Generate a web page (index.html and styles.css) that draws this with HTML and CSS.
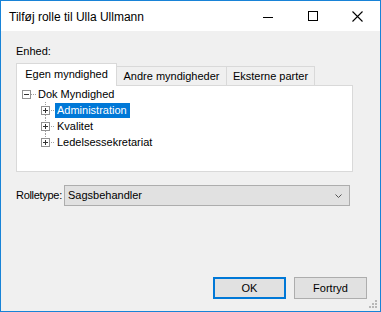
FILE: index.html
```html
<!DOCTYPE html>
<html>
<head>
<meta charset="utf-8">
<link rel="stylesheet" href="styles.css">
</head>
<body>
<div class="window">
  <div class="titlebar">
    <div class="title">Tilføj rolle til Ulla Ullmann</div>
    <div class="caption-btns">
      <div class="cbtn"><svg width="10" height="10" viewBox="0 0 10 10"><path d="M0 6.5H10" stroke="#000" stroke-width="1" shape-rendering="crispEdges"/></svg></div>
      <div class="cbtn"><svg width="10" height="10" viewBox="0 0 10 10"><rect x="0.5" y="0.5" width="9" height="9" fill="none" stroke="#000" stroke-width="1" shape-rendering="crispEdges"/></svg></div>
      <div class="cbtn"><svg width="11" height="11" viewBox="0 0 11 11"><path d="M0.5 0.5L10.5 10.5M10.5 0.5L0.5 10.5" stroke="#000" stroke-width="1.1"/></svg></div>
    </div>
  </div>
  <div class="content">
    <div class="label">Enhed:</div>
    <div class="tabs">
      <div class="tab tab-active w1">Egen myndighed</div>
      <div class="tab w2">Andre myndigheder</div>
      <div class="tab w3">Eksterne parter</div>
    </div>
    <div class="panel">
      <div class="tree">
        <div class="row">
          <svg class="gutter g-root" width="19" height="16" viewBox="0 0 19 16" shape-rendering="crispEdges">
            <rect x="5.5" y="4.5" width="8" height="8" fill="#fff" stroke="#919191"/>
            <path d="M7 8.5H12" stroke="#333"/>
            <path d="M14 8.5H19" stroke="#a0a0a0" stroke-dasharray="1,1"/>
          </svg>
          <span class="node">Dok Myndighed</span>
        </div>
        <div class="row">
          <svg class="gutter g-child" width="38" height="16" viewBox="0 0 38 16" shape-rendering="crispEdges">
            <path d="M28.5 0V4M28.5 13V16" stroke="#a0a0a0" stroke-dasharray="1,1"/>
            <rect x="24.5" y="4.5" width="8" height="8" fill="#fff" stroke="#919191"/>
            <path d="M26 8.5H31M28.5 6V11" stroke="#333"/>
            <path d="M34 8.5H38" stroke="#a0a0a0" stroke-dasharray="1,1"/>
          </svg>
          <span class="node selected">Administration</span>
        </div>
        <div class="row">
          <svg class="gutter g-child" width="38" height="16" viewBox="0 0 38 16" shape-rendering="crispEdges">
            <path d="M28.5 0V4M28.5 13V16" stroke="#a0a0a0" stroke-dasharray="1,1"/>
            <rect x="24.5" y="4.5" width="8" height="8" fill="#fff" stroke="#919191"/>
            <path d="M26 8.5H31M28.5 6V11" stroke="#333"/>
            <path d="M34 8.5H38" stroke="#a0a0a0" stroke-dasharray="1,1"/>
          </svg>
          <span class="node">Kvalitet</span>
        </div>
        <div class="row">
          <svg class="gutter g-child" width="38" height="16" viewBox="0 0 38 16" shape-rendering="crispEdges">
            <path d="M28.5 0V4" stroke="#a0a0a0" stroke-dasharray="1,1"/>
            <rect x="24.5" y="4.5" width="8" height="8" fill="#fff" stroke="#919191"/>
            <path d="M26 8.5H31M28.5 6V11" stroke="#333"/>
            <path d="M34 8.5H38" stroke="#a0a0a0" stroke-dasharray="1,1"/>
          </svg>
          <span class="node">Ledelsessekretariat</span>
        </div>
      </div>
    </div>
    <div class="role-row">
      <div class="role-label">Rolletype:</div>
      <div class="combo">
        <span class="combo-text">Sagsbehandler</span>
        <svg class="chevron" width="7" height="4" viewBox="0 0 7 4"><polyline points="0.5,0.5 3.5,3.5 6.5,0.5" fill="none" stroke="#555" stroke-width="1"/></svg>
      </div>
    </div>
    <div class="buttons">
      <div class="btn btn-default">OK</div>
      <div class="btn">Fortryd</div>
    </div>
    <svg class="grip" width="9" height="9" viewBox="0 0 9 9">
      <rect x="6" y="0" width="2" height="2" fill="#b8b8b8"/>
      <rect x="3" y="3" width="2" height="2" fill="#b8b8b8"/>
      <rect x="6" y="3" width="2" height="2" fill="#b8b8b8"/>
      <rect x="0" y="6" width="2" height="2" fill="#b8b8b8"/>
      <rect x="3" y="6" width="2" height="2" fill="#b8b8b8"/>
      <rect x="6" y="6" width="2" height="2" fill="#b8b8b8"/>
    </svg>
  </div>
</div>
</body>
</html>
```
FILE: styles.css
```css
html, body {
  margin: 0;
  padding: 0;
  background: #fff;
}
.window {
  width: 381px;
  height: 312px;
  box-sizing: border-box;
  border: 1px solid #1883d7;
  display: flex;
  flex-direction: column;
  font-family: "Liberation Sans", Arial, sans-serif;
  font-size: 11px;
  color: #000;
  overflow: hidden;
}
.titlebar {
  height: 30px;
  flex: none;
  background: #fff;
  display: flex;
  align-items: center;
}
.title {
  font-size: 12px;
  padding-left: 8px;
  padding-top: 1px;
  flex: 1;
}
.caption-btns {
  display: flex;
  height: 30px;
}
.cbtn {
  width: 45px;
  height: 30px;
  display: flex;
  align-items: center;
  justify-content: center;
}
.content {
  flex: 1;
  background: #f0f0f0;
  display: flex;
  flex-direction: column;
  padding: 14px 0 0 15px;
  position: relative;
}
.label {
  line-height: 13px;
  height: 13px;
}
.tabs {
  margin-top: 5px;
  height: 22px;
  display: flex;
  align-items: flex-end;
}
.tab {
  box-sizing: border-box;
  height: 19px;
  border: 1px solid #d9d9d9;
  border-bottom: none;
  background: #f0f0f0;
  text-align: center;
  line-height: 13px;
  padding-top: 3px;
  margin-left: -1px;
  white-space: nowrap;
}
.tab-active {
  height: 23px;
  margin-left: 0;
  margin-bottom: -1px;
  background: #fff;
  position: relative;
  z-index: 1;
  padding-top: 4px;
}
.w1 { width: 101px; }
.w2 { width: 111px; }
.w3 { width: 89px; }
.panel {
  box-sizing: border-box;
  width: 337px;
  height: 87px;
  border: 1px solid #d9d9d9;
  background: #fff;
}
.tree {
  display: flex;
  flex-direction: column;
}
.row {
  height: 16px;
  display: flex;
  align-items: center;
}
.gutter {
  flex: none;
  display: block;
}
.node {
  line-height: 15px;
  height: 15px;
  padding: 0 3px 0 2px;
  white-space: nowrap;
}
.selected {
  background: #0078d7;
  color: #fff;
}
.role-row {
  margin-top: 13px;
  display: flex;
  align-items: center;
  height: 21px;
}
.role-label {
  width: 48px;
  line-height: 21px;
  letter-spacing: -0.3px;
  white-space: nowrap;
}
.combo {
  box-sizing: border-box;
  width: 286px;
  height: 21px;
  border: 1px solid #adadad;
  background: #e1e1e1;
  display: flex;
  align-items: center;
  padding-left: 3px;
  padding-right: 7px;
}
.combo-text {
  flex: 1;
  line-height: 19px;
}
.chevron {
  display: block;
}
.buttons {
  margin-top: auto;
  margin-bottom: 12px;
  display: flex;
  justify-content: flex-end;
  gap: 8px;
  padding-right: 13px;
}
.btn {
  box-sizing: border-box;
  width: 73px;
  height: 22px;
  border: 1px solid #adadad;
  background: #e1e1e1;
  text-align: center;
  line-height: 20px;
}
.btn-default {
  border: 2px solid #0078d7;
  line-height: 18px;
}
.grip {
  position: absolute;
  right: 2px;
  bottom: 2px;
}
```
